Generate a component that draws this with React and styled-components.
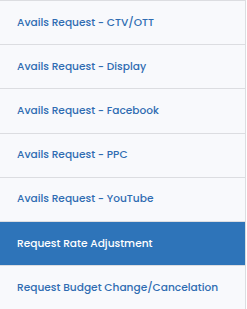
import React from 'react';
import styled, { createGlobalStyle } from 'styled-components';

const GlobalStyle = createGlobalStyle`
  html, body {
    margin: 0;
    padding: 0;
    background: #ffffff;
  }
`;

const Menu = styled.ul`
  list-style: none;
  margin: 0;
  padding: 0;
  width: 245px;
  background: #f8f9fc;
  border-top: 1px solid #dcdde1;
  border-right: 1px solid #dcdde1;
  font-family: Poppins, Inter, "Noto Sans", sans-serif;
`;

const Item = styled.li`
  display: flex;
  align-items: center;
  height: 43.2px;
  padding: 0 0 0 17px;
  border-bottom: 1px solid #dcdde1;
  background: ${p => (p.$active ? '#2e74b9' : 'transparent')};
  color: ${p => (p.$active ? '#ffffff' : '#2f6cb2')};
  font-size: 10.6px;
  font-weight: 500;
  white-space: nowrap;

  &:last-child {
    border-bottom: none;
  }
`;

const items = [
  'Avails Request - CTV/OTT',
  'Avails Request - Display',
  'Avails Request - Facebook',
  'Avails Request - PPC',
  'Avails Request - YouTube',
  'Request Rate Adjustment',
  'Request Budget Change/Cancelation',
];

export default function App() {
  return (
    <>
      <GlobalStyle />
      <Menu>
        {items.map((label, i) => (
          <Item key={i} $active={i === 5}>{label}</Item>
        ))}
      </Menu>
    </>
  );
}
